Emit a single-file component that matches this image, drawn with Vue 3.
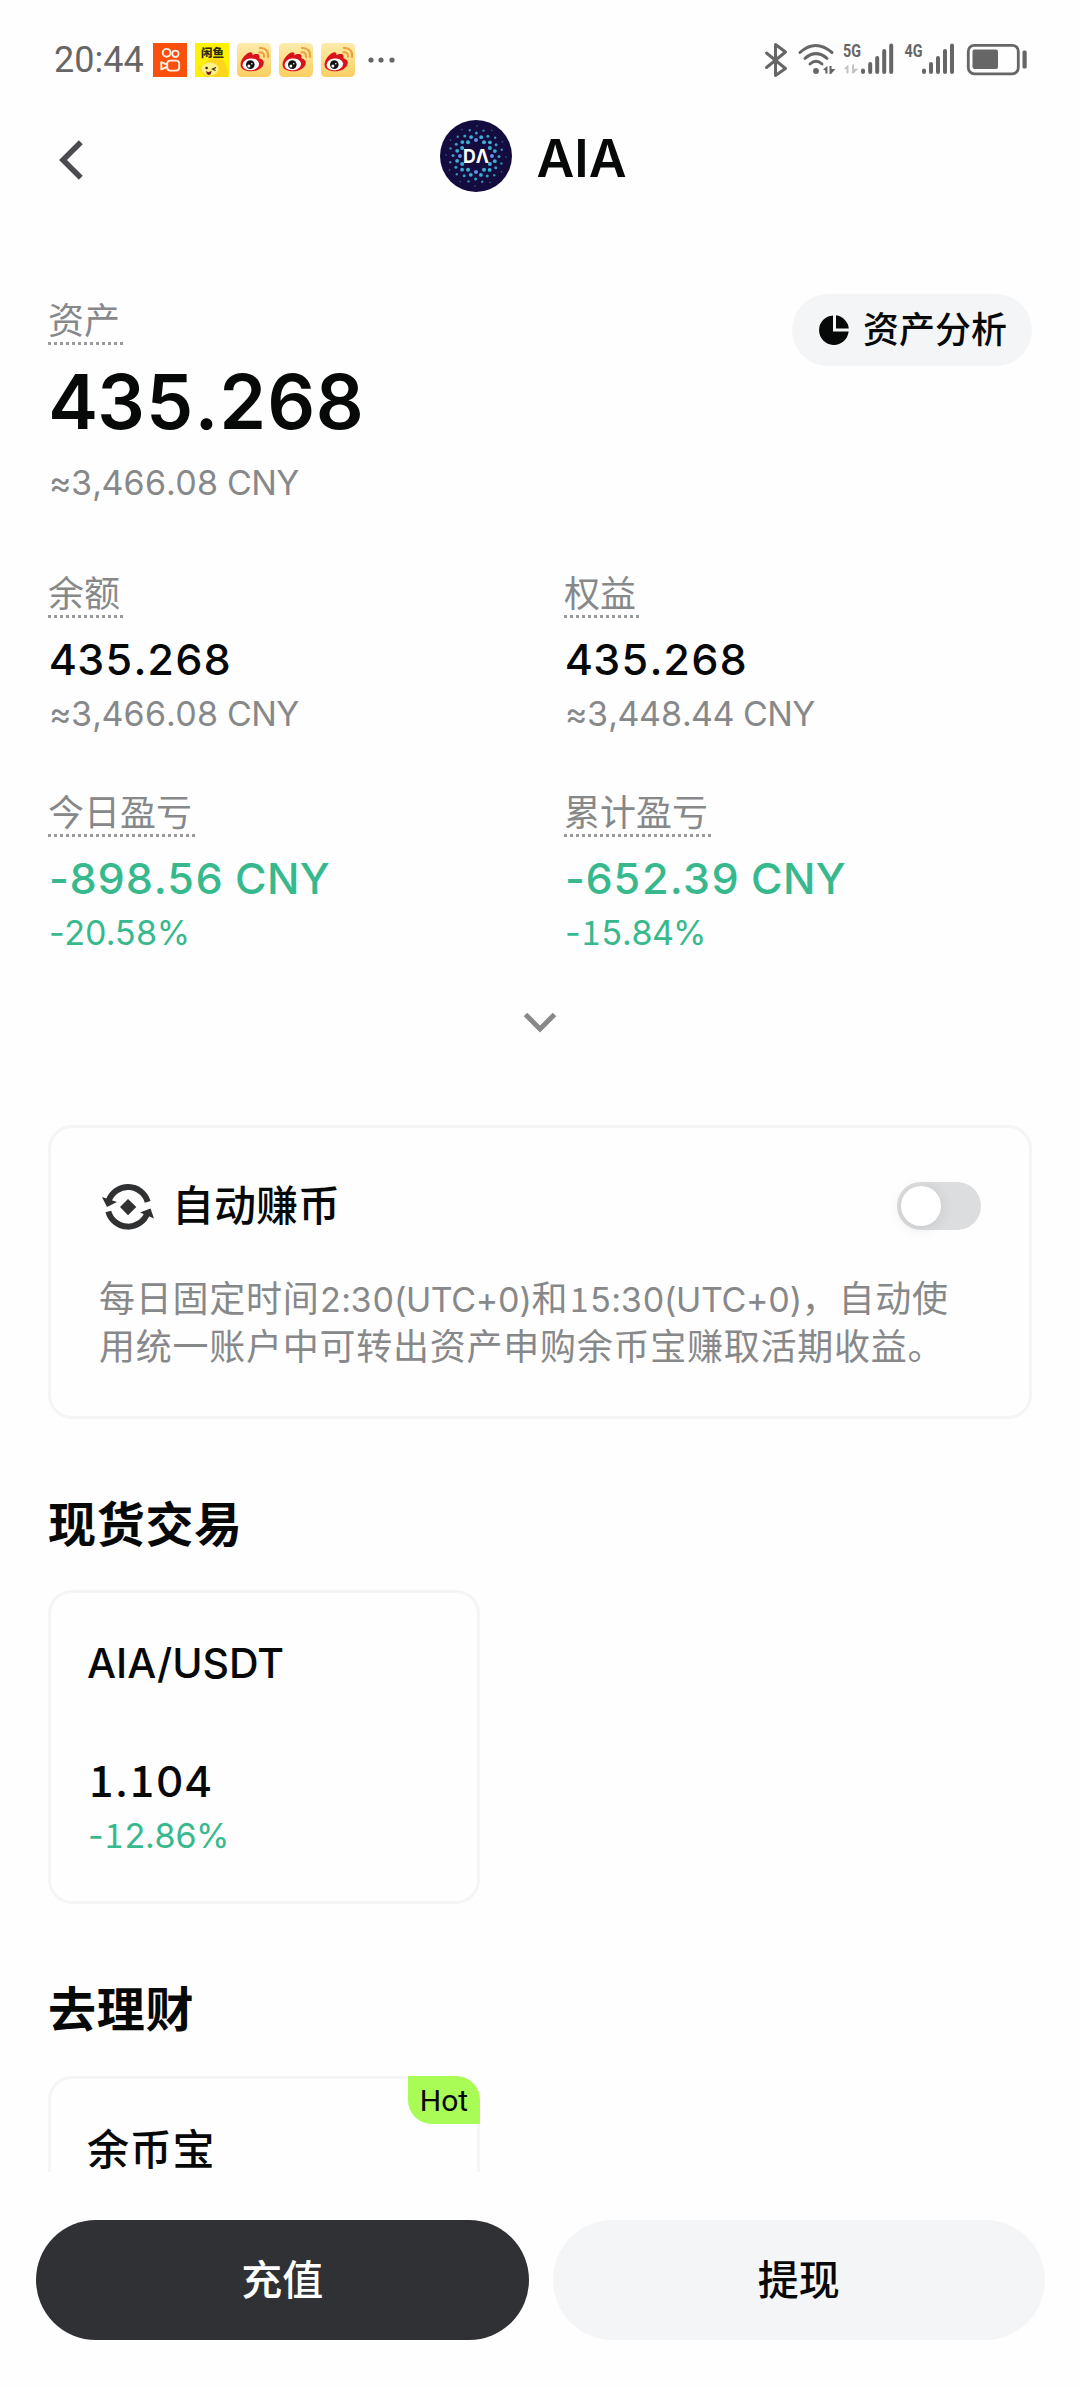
<script setup>
import { h } from 'vue'

// Renders figures with tabular digits and a footed "1" taken from the CJK family
const Num = (props) =>
  h(
    'span',
    { class: 'num' },
    props.v.split(/(1|[02-9]+)/).filter(Boolean).map((s) => {
      if (s === '1') return h('span', { class: 'one' }, '1')
      return /\d/.test(s) ? h('span', { class: 'dig' }, s) : s
    })
  )
Num.props = ['v']

const metrics = [
  { label: '余额', value: '435.268', sub: '≈3,466.08 CNY' },
  { label: '权益', value: '435.268', sub: '≈3,448.44 CNY' },
  { label: '今日盈亏', value: '-898.56 CNY', sub: '-20.58%', down: true },
  { label: '累计盈亏', value: '-652.39 CNY', sub: '-15.84%', down: true }
]

// Swirl of dots around the coin logo centre
const dots = []
for (let arm = 0; arm < 12; arm++) {
  for (let k = 0; k < 5; k++) {
    const a = (arm / 12) * Math.PI * 2 + k * 0.27
    const r = 16 + k * 3.5
    dots.push({
      x: 36 + Math.cos(a) * r,
      y: 36 + Math.sin(a) * r,
      r: [2, 1.9, 1.5, 1.2, 0.8][k],
      o: [1, 1, 0.9, 0.8, 0.6][k],
      c: k < 1 && arm % 3 === 0 ? '#5f8fe6' : '#3ab0d4'
    })
  }
}
</script>

<template>
  <div class="phone">
    <div class="status">
      <span class="time">20:44</span>
      <div class="apps">
        <svg width="34" height="34" viewBox="0 0 34 34">
          <rect width="34" height="34" fill="#f9500d" />
          <g fill="none" stroke="#fff1e6" stroke-width="1.9">
            <circle cx="13.6" cy="9.8" r="3.9" />
            <circle cx="22.4" cy="10.8" r="3.2" />
            <rect x="14.2" y="17.6" width="12" height="10" rx="3" />
            <path d="M14 21.6 L8.3 19.2 V26.4 L14 24" stroke-linejoin="round" />
          </g>
        </svg>
        <svg width="34" height="34" viewBox="0 0 34 34">
          <rect width="34" height="34" fill="#fff200" />
          <path d="M17 34 C20 34 33 34 33 34 C34 28 31 17 25 16 C20 13 10 17 8 24 C6 29 8 33 11 34 Z" fill="#ffd51c" />
          <path d="M3 24 C4 29 7 30 9 34 H17 C12 32 9 28 7 25 C6 23 3 22 3 24Z" fill="#ffdf25" />
          <ellipse cx="15" cy="26" rx="8.5" ry="6.5" fill="#fff08a" />
          <path d="M11 28 Q14.500 30 16.500 27.500 Q16.500 32 13.500 32 Q11 31 11 28Z" fill="#7a2413" />
          <circle cx="11.600" cy="25" r="1.300" fill="#2c2410" />
          <path d="M21 24.500 L17.500 26 L20.500 27.500" fill="none" stroke="#2c2410" stroke-width="1.200" />
          <text x="17.500" y="14" text-anchor="middle" class="fish" fill="#2b2a10">闲鱼</text>
        </svg>
        <svg v-for="n in 3" :key="n" width="34" height="34" viewBox="0 0 34 34">
          <defs>
            <linearGradient id="wb" x1="0" y1="0" x2="0" y2="1">
              <stop offset="0" stop-color="#fdebac" />
              <stop offset="1" stop-color="#fbcf62" />
            </linearGradient>
          </defs>
          <rect width="34" height="34" rx="4.500" fill="url(#wb)" />
          <path d="M3.600 21.800 C3.600 17 8 11.500 11.600 9.800 C14 8.400 16 9.500 15.400 12.200 C18 10.800 22.500 10.300 22.600 13.300 C22.600 14.300 22.200 15 22.400 15.200 C25 16 27 17.300 26.800 20 C26.300 25 20.500 28.300 14 28.300 C8 28.300 3.600 26 3.600 21.800Z" fill="#d8121b" />
          <ellipse cx="13.800" cy="21.400" rx="8.300" ry="5.900" fill="#fff" transform="rotate(-8 13.800 21.400)" />
          <circle cx="13.300" cy="21.600" r="4.300" fill="#111" />
          <circle cx="11.900" cy="22.900" r="1.500" fill="#fff" />
          <circle cx="14.800" cy="20.700" r=".8" fill="#fff" />
          <g fill="none" stroke="#eba03b" stroke-width="2" stroke-linecap="round">
            <path d="M22.500 9.300 C25.600 9 27.300 10.800 27 13.800" />
            <path d="M22.800 5 C28.500 4.300 31.900 8.300 31 14" />
          </g>
        </svg>
      </div>
      <svg class="more" width="28" height="8" viewBox="0 0 28 8" fill="#666">
        <circle cx="3" cy="4" r="2.600" /><circle cx="13" cy="4" r="2.600" /><circle cx="24" cy="4" r="2.600" />
      </svg>
      <svg class="sys" width="264" height="48" viewBox="765 36 264 48">
        <g fill="none" stroke="#666" stroke-width="3" stroke-linejoin="round" stroke-linecap="round">
          <path d="M767.500 53 L786.500 68.500 L776.500 75.500 V44.500 L786.500 52 L767.500 67.500" />
          <path d="M801 52.500 Q816.500 38.500 833 52.500 M806 58.300 Q817 49 828 58.300 M811 64 Q817 58.500 823 64" />
        </g>
        <circle cx="817" cy="71" r="2.900" fill="#666" />
        <path d="M824 69.500 L828.500 66 V73.500 H826.300 V70.500Z M830.500 66 H832.600 V69 L836.500 69 L832 74 H830.500Z" fill="#666" />
        <text x="844" y="57" class="net" textLength="18" lengthAdjust="spacingAndGlyphs">5G</text>
        <path d="M845 68.500 L849.500 64.500 V73.500 H847.500 V69.500Z M853 64.500 H855 V69 L859.500 68.500 L854.500 73.500 H853Z" fill="#c4c4c4" />
        <text x="905.500" y="57" class="net" textLength="18" lengthAdjust="spacingAndGlyphs">4G</text>
        <g stroke="#666" stroke-width="4" stroke-linecap="round">
          <path d="M864 70.500V72 M871.200 64V72 M878.200 58V72 M885.200 51V72 M892.200 45.500V72" />
          <path d="M925 70.500V72 M932 64V72 M939 58V72 M946 51V72 M953 45.500V72" />
        </g>
        <rect x="969.300" y="45.300" width="50" height="28.500" rx="6" fill="none" stroke="#666" stroke-width="2.800" />
        <rect x="973.500" y="49.500" width="25.500" height="19.500" rx="2" fill="#666" />
        <rect x="1023.500" y="50.500" width="4.200" height="18" rx="1.500" fill="#666" />
      </svg>
    </div>

    <header class="head">
      <svg class="back" width="26" height="40" viewBox="0 0 26 40">
        <path d="M22.800 2.300 L5 20 L22.800 37.700" fill="none" stroke="#4b4c50" stroke-width="5.600" stroke-linejoin="miter" />
      </svg>
      <div class="coin">
        <svg width="72" height="72" viewBox="0 0 72 72">
          <circle cx="36" cy="36" r="36" fill="#140b3f" />
          <circle v-for="(d, i) in dots" :key="i" :cx="d.x" :cy="d.y" :r="d.r" :fill="d.c" :opacity="d.o" />
          <text x="36" y="42.500" text-anchor="middle" class="da" textLength="26" lengthAdjust="spacingAndGlyphs">DΛ</text>
        </svg>
        <h1>AIA</h1>
      </div>
    </header>

    <main class="scroll">
      <section class="summary">
        <div>
          <span class="label">资产</span>
          <div class="total"><Num v="435.268" /></div>
          <div class="sub"><Num v="≈3,466.08 CNY" /></div>
        </div>
        <button class="pill">
          <svg width="30" height="30" viewBox="0 0 30 30">
            <path d="M14 .4 A14.800 14.800 0 1 0 29.600 16.500 H14Z" fill="#070909" />
            <path d="M17 .3 A14.800 14.800 0 0 1 29.800 13.500 H17Z" fill="#070909" />
          </svg>
          <span>资产分析</span>
        </button>
      </section>

      <section class="metrics">
        <div v-for="m in metrics" :key="m.label" :class="{ down: m.down }">
          <span class="label">{{ m.label }}</span>
          <div class="value"><Num :v="m.value" /></div>
          <div class="sub"><Num :v="m.sub" /></div>
        </div>
      </section>

      <svg class="expand" width="34" height="22" viewBox="0 0 34 22">
        <path d="M2.500 3.500 L17 18 L31.500 3.500" fill="none" stroke="#87888a" stroke-width="5" />
      </svg>

      <section class="card earn">
        <div class="earn-head">
          <svg width="52" height="48" viewBox="0 0 52 48">
            <g fill="none" stroke="#2f3133" stroke-width="6">
              <path d="M6.800 18.500 A20.500 20.500 0 0 1 45.700 19.800" />
              <path d="M6.300 29.500 A20.500 20.500 0 0 0 45.400 31" />
            </g>
            <path d="M0 15 L15 20 L5 25Z M52 36.500 L38 30.500 L48.500 26.500Z M26 17 L34.300 25 L26 33.200 L18 25Z" fill="#2f3133" />
          </svg>
          <h3>自动赚币</h3>
          <span class="toggle"><i></i></span>
        </div>
        <p>每日固定时间<span class="lat"><Num v="2:30(UTC+0)" /></span>和<span class="lat"><Num v="15:30(UTC+0)" /></span>，自动使<br />用统一账户中可转出资产申购余币宝赚取活期收益。</p>
      </section>

      <h2>现货交易</h2>
      <section class="card tile spot down">
        <div class="name">AIA/USDT</div>
        <div class="value price"><Num v="1.104" /></div>
        <div class="sub"><Num v="-12.86%" /></div>
      </section>

      <h2>去理财</h2>
      <section class="card tile savings">
        <span class="hot">Hot</span>
        <div class="name cn">余币宝</div>
      </section>
    </main>

    <footer>
      <button class="dark">充值</button>
      <button>提现</button>
    </footer>
  </div>
</template>

<style>
body {
  margin: 0;
  background: #fefefe;
}
.num .dig {
  font-variant-numeric: tabular-nums;
}
.num .one {
  display: inline-block;
  width: 0.63em;
  text-align: center;
  font-family: 'Noto Sans CJK SC', sans-serif;
  line-height: 0;
}
</style>

<style scoped>
.phone {
  width: 1080px;
  height: 2388px;
  display: flex;
  flex-direction: column;
  background: #fefefe;
  color: #070909;
  font-family: Inter, 'Noto Sans CJK SC', sans-serif;
  font-size: 36px;
}
h1, h2, h3, p { margin: 0; }
svg { display: block; flex: none; }
button {
  border: 0;
  padding: 0;
  font: inherit;
  color: inherit;
  background: #f4f5f7;
}

.status {
  height: 120px;
  flex: none;
  display: flex;
  align-items: center;
  padding: 0 52px 0 54px;
  box-sizing: border-box;
}
.time {
  width: 99px;
  font-family: Roboto, sans-serif;
  font-size: 36px;
  line-height: 40px;
  color: #666;
}
.apps { display: flex; gap: 8px; }
.fish { font: 900 11.500px 'Noto Sans CJK SC', sans-serif; }
.more { margin-left: 13px; }
.sys { margin-left: auto; }
.net {
  font: 700 19px Roboto, sans-serif;
  fill: #666;
}

.head {
  height: 72px;
  flex: none;
  position: relative;
  display: flex;
  justify-content: center;
}
.back {
  position: absolute;
  left: 58px;
  top: 20px;
}
.coin { display: flex; gap: 24px; padding-right: 13px; }
.da { font: 700 19px Inter, sans-serif; fill: #fff; }
h1 {
  font-size: 52px;
  font-weight: 600;
  line-height: 77px;
}

.scroll {
  flex: 1;
  min-height: 0;
  overflow: hidden;
  padding: 102px 48px 0;
}
.summary {
  display: flex;
  justify-content: space-between;
  align-items: flex-start;
}
.summary .label { margin-top: 3px; }
.label {
  display: block;
  box-sizing: border-box;
  width: fit-content;
  height: 48px;
  padding-right: 3px;
  line-height: 48px;
  color: #87888a;
  background: repeating-linear-gradient(90deg, #999a9b 0 3px, transparent 3px 6px) left bottom / 100% 3px no-repeat;
}
.total {
  margin-top: 15px;
  padding-left: 1px;
  font-size: 75px;
  font-weight: 600;
  line-height: 84px;
}
.sub {
  font-size: 34px;
  line-height: 48px;
  letter-spacing: -0.6px;
  padding-left: 1px;
  color: #87888a;
}
.summary .sub { margin-top: 15px; }
.down .sub { letter-spacing: -1px; }
.pill {
  width: 240px;
  height: 72px;
  border-radius: 36px;
  display: flex;
  align-items: center;
  padding-left: 27px;
  box-sizing: border-box;
  gap: 14px;
  font-weight: 500;
  white-space: nowrap;
}
.pill span { line-height: 72px; height: 72px; }

.metrics {
  margin-top: 63px;
  display: grid;
  grid-template-columns: 516px 1fr;
  row-gap: 51px;
}
.value {
  margin-top: 12px;
  padding-left: 1px;
  font-size: 43px;
  font-weight: 500;
  line-height: 59px;
  height: 60px;
  letter-spacing: 0.3px;
}
.down .value:not(.price), .down .sub { color: #37b98d; }
.expand { margin: 54px auto 0; }

.card {
  border: 3px solid #f4f5f6;
  border-radius: 24px;
  box-sizing: border-box;
}
.earn {
  margin-top: 92px;
  height: 294px;
  padding: 54px 48px 0;
}
.earn-head {
  display: flex;
  align-items: center;
  height: 48px;
  padding-left: 3px;
}
h3 {
  margin-left: 18px;
  font-size: 42px;
  font-weight: 500;
  line-height: 52px;
}
.toggle {
  margin-left: auto;
  width: 84px;
  height: 48px;
  border-radius: 24px;
  background: #dcdddf;
  display: flex;
  align-items: center;
  padding-left: 4px;
  box-sizing: border-box;
}
.toggle i {
  width: 40px;
  height: 40px;
  border-radius: 50%;
  background: #fff;
  box-shadow: 0 2px 14px rgba(0, 0, 0, 0.1);
}
.earn p {
  margin-top: 45px;
  line-height: 48px;
  letter-spacing: 0.75px;
  white-space: nowrap;
  color: #87888a;
}
.lat { font-size: 34px; line-height: 0; letter-spacing: -0.4px; }

h2 {
  margin-top: 76px;
  font-size: 48px;
  font-weight: 600;
  line-height: 60px;
  letter-spacing: 0.7px;
}
.tile {
  position: relative;
  width: 432px;
  padding: 40px 36px 0;
}
.spot { margin-top: 35px; height: 314px; }
.savings { margin-top: 36px; height: 314px; }
.name {
  font-size: 41px;
  font-weight: 500;
  line-height: 60px;
}
.savings .name {
  margin-top: 9px;
  font-size: 42px;
  letter-spacing: 0.8px;
  line-height: 44px;
}
.price { margin-top: 59px; letter-spacing: 0.6px; }
.hot {
  position: absolute;
  right: -3px;
  top: -3px;
  width: 72px;
  height: 48px;
  border-radius: 0 24px 0 24px;
  background: #a9fb56;
  font: 400 30px/50px Roboto, sans-serif;
  text-align: center;
}

footer {
  height: 216px;
  flex: none;
  box-sizing: border-box;
  padding: 48px 35px 48px 36px;
  display: flex;
  gap: 24px;
}
footer button {
  flex: 1;
  border-radius: 60px;
  font-size: 41px;
  font-weight: 500;
  line-height: 119px;
}
footer .dark { background: #303134; color: #fff; }
</style>
